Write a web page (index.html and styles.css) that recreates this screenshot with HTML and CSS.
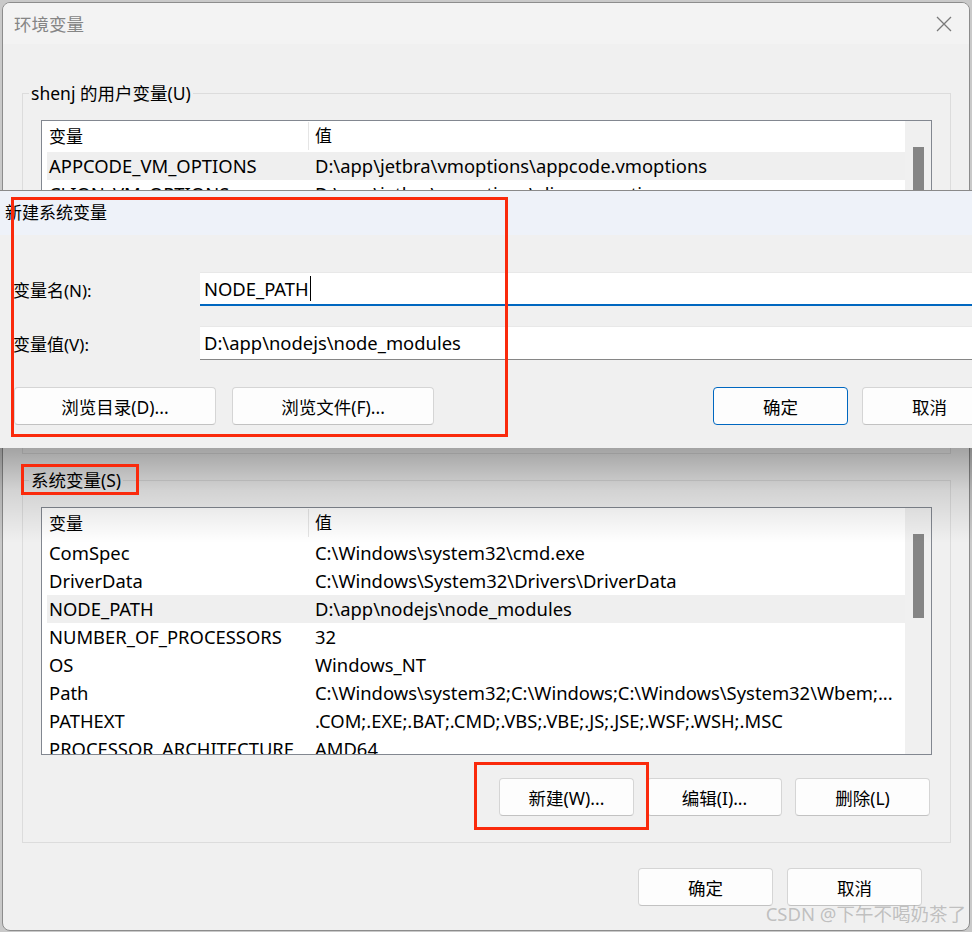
FILE: index.html
```html
<!DOCTYPE html>
<html lang="zh-CN">

<head>
    <meta charset="UTF-8">
    <meta name="viewport" content="width=device-width, initial-scale=1.0">
    <title>环境变量</title>

    <link rel="stylesheet" href="styles.css">

</head>

<body>
    <div class="window">
        <div class="titlebar">
            <span class="title">环境变量</span>
            <svg class="close" width="16" height="16" viewBox="0 0 16 16">
                <path d="M1 1L15 15M15 1L1 15" stroke="#7a7a7a" stroke-width="1.3" fill="none" />
            </svg>
        </div>

        <div class="window-body">
            <fieldset class="group">
                <legend>shenj 的用户变量(U)</legend>
                <div class="list">
                    <div class="list-rows">
                        <div class="row head"><span class="col-name">变量</span><span class="col-value">值</span></div>
                        <div class="row selected"><span class="col-name">APPCODE_VM_OPTIONS</span><span class="col-value">D:\app\jetbra\vmoptions\appcode.vmoptions</span></div>
                        <div class="row"><span class="col-name">CLION_VM_OPTIONS</span><span class="col-value">D:\app\jetbra\vmoptions\clion.vmoptions</span></div>
                        <div class="row"><span class="col-name">DATAGRIP_VM_OPTIONS</span><span class="col-value">D:\app\jetbra\vmoptions\datagrip.vmoptions</span></div>
                    </div>
                    <div class="scrollbar"><div class="thumb"></div></div>
                </div>
            </fieldset>

            <fieldset class="group sys-group">
                <legend>系统变量(S)</legend>
                <div class="list">
                    <div class="list-rows">
                        <div class="row head"><span class="col-name">变量</span><span class="col-value">值</span></div>
                        <div class="row"><span class="col-name">ComSpec</span><span class="col-value">C:\Windows\system32\cmd.exe</span></div>
                        <div class="row"><span class="col-name">DriverData</span><span class="col-value">C:\Windows\System32\Drivers\DriverData</span></div>
                        <div class="row selected"><span class="col-name">NODE_PATH</span><span class="col-value">D:\app\nodejs\node_modules</span></div>
                        <div class="row"><span class="col-name">NUMBER_OF_PROCESSORS</span><span class="col-value">32</span></div>
                        <div class="row"><span class="col-name">OS</span><span class="col-value">Windows_NT</span></div>
                        <div class="row"><span class="col-name">Path</span><span class="col-value">C:\Windows\system32;C:\Windows;C:\Windows\System32\Wbem;...</span></div>
                        <div class="row"><span class="col-name">PATHEXT</span><span class="col-value">.COM;.EXE;.BAT;.CMD;.VBS;.VBE;.JS;.JSE;.WSF;.WSH;.MSC</span></div>
                        <div class="row"><span class="col-name">PROCESSOR_ARCHITECTURE</span><span class="col-value">AMD64</span></div>
                    </div>
                    <div class="scrollbar"><div class="thumb"></div></div>
                </div>
                <div class="btn-row">
                    <button class="btn">新建(W)...</button>
                    <button class="btn">编辑(I)...</button>
                    <button class="btn">删除(L)</button>
                </div>
            </fieldset>

            <div class="footer-btns">
                <button class="btn">确定</button>
                <button class="btn">取消</button>
            </div>
        </div>
    </div>

    <div class="dialog">
        <div class="dialog-title">新建系统变量</div>
        <div class="dialog-body">
            <div class="field-row">
                <label>变量名(N):</label>
                <div class="field active"><span class="caret">NODE_PATH</span></div>
            </div>
            <div class="field-row">
                <label>变量值(V):</label>
                <div class="field">D:\app\nodejs\node_modules</div>
            </div>
            <div class="dialog-btns">
                <div class="btn-group">
                    <button class="btn wide">浏览目录(D)...</button>
                    <button class="btn wide">浏览文件(F)...</button>
                </div>
                <div class="btn-group">
                    <button class="btn default">确定</button>
                    <button class="btn">取消</button>
                </div>
            </div>
        </div>
    </div>

    <div class="mark mark-dialog"></div>
    <div class="mark mark-sys"></div>
    <div class="mark mark-new"></div>

    <div class="watermark">CSDN @下午不喝奶茶了</div>
</body>

</html>
```

FILE: styles.css
```css
* {
    box-sizing: border-box;
    margin: 0;
    padding: 0;
}

body {
    width: 972px;
    height: 932px;
    overflow: hidden;
    position: relative;
    background-color: #c9c9c9;
    font-family: "Noto Sans", "Noto Sans CJK SC", sans-serif;
    font-size: 17px;
    color: #000;
}

.window {
    width: 968px;
    height: 929px;
    margin: 2px 0 0 2px;
    border: 1px solid #8c8c8c;
    border-radius: 8px;
    background-color: #f0f0f0;
    overflow: hidden;
}

.titlebar {
    height: 41px;
    display: flex;
    align-items: center;
    justify-content: space-between;
    padding: 0 17px 0 11px;
    background-color: #f3f3f3;
}

.title {
    color: #858585;
    font-size: 17.5px;
}

.window-body {
    padding: 0 18px 0 19px;
}

/* group boxes */
.group {
    border: 1px solid #dcdcdc;
    height: 373px;
    margin-top: 37px;
    padding: 15px 18px 0 18px;
}

.group legend {
    margin-left: -12px;
    padding: 0 2px;
    line-height: 24px;
    font-size: 17.5px;
}

.sys-group {
    margin-top: 14px;
    height: 375px;
}

/* list views */
.list {
    display: flex;
    height: 248px;
    border: 1px solid #828790;
    background-color: #fff;
}

.list-rows {
    flex: 1;
    overflow: hidden;
}

.row {
    display: flex;
    height: 28px;
    line-height: 28px;
    margin-left: 5px;
    white-space: nowrap;
    font-size: 18.4px;
}

.row.head {
    height: 31px;
    line-height: 31px;
    font-size: 17px;
}

.row.selected {
    background-color: #efefef;
}

.col-name {
    width: 261px;
    padding-left: 2px;
    flex: none;
}

.col-value {
    padding-left: 7px;
}

.head .col-value {
    border-left: 1px solid #e5e5e5;
    padding-left: 6px;
    margin: 1px 0 2px;
    line-height: 28px;
    flex: 1;
}

.scrollbar {
    width: 26px;
    background-color: #f0f0f0;
    padding: 26px 0 0 8px;
}

.thumb {
    width: 11px;
    height: 84px;
    background-color: #858585;
}

/* buttons */
.btn {
    font-family: inherit;
    font-size: 17.5px;
    width: 135px;
    height: 38px;
    background-color: #fdfdfd;
    border: 1px solid #d5d5d5;
    border-bottom-color: #c2c2c2;
    border-radius: 4px;
    color: #000;
}

.btn.wide {
    width: 202px;
}

.btn.default {
    border-color: #0067c0;
}

.btn-row {
    display: flex;
    justify-content: flex-end;
    gap: 13px;
    margin: 23px 2px 0 0;
}

.footer-btns {
    display: flex;
    justify-content: flex-end;
    gap: 14px;
    margin: 25px 29px 0 0;
}

/* new variable dialog on top */
.dialog {
    position: absolute;
    top: 190px;
    left: 0;
    width: 1010px;
    border-top: 1px solid #8a8a8a;
    background-color: #f0f0f0;
}

.dialog::after {
    content: "";
    position: absolute;
    top: 100%;
    left: 0;
    right: 0;
    height: 95px;
    background: linear-gradient(rgba(0, 0, 0, 0.32), rgba(0, 0, 0, 0.12) 45%, rgba(0, 0, 0, 0));
}

.dialog-title {
    height: 44px;
    line-height: 44px;
    padding-left: 5px;
    background-color: #eef2f9;
}

.dialog-body {
    height: 213px;
    padding: 37px 13px 0 13px;
}

.field-row {
    display: flex;
    align-items: center;
    height: 34px;
    margin-bottom: 20px;
}

.field-row label {
    width: 187px;
    flex: none;
}

.field {
    flex: 1;
    height: 34px;
    line-height: 32px;
    padding-left: 4px;
    font-size: 18.4px;
    background-color: #fff;
    border-top: 1px solid #e8e8e8;
    border-bottom: 1px solid #868686;
}

.field.active {
    border-bottom: 2px solid #0067c0;
}

.caret {
    border-right: 1px solid #000;
    padding-right: 1px;
}

.dialog-btns {
    display: flex;
    justify-content: space-between;
    margin-top: 27px;
    padding-left: 1px;
}

.btn-group {
    display: flex;
    gap: 14px;
}

.btn-group:first-child {
    gap: 16px;
}

/* red annotation boxes */
.mark {
    position: absolute;
    border: 3px solid #fa2a0c;
}

.mark-dialog {
    left: 11px;
    top: 197px;
    width: 497px;
    height: 240px;
}

.mark-sys {
    left: 21px;
    top: 464px;
    width: 118px;
    height: 31px;
}

.mark-new {
    left: 474px;
    top: 762px;
    width: 175px;
    height: 68px;
}

.watermark {
    position: absolute;
    right: 6px;
    bottom: 6px;
    font-size: 18.5px;
    color: rgba(150, 150, 150, 0.55);
}
```
